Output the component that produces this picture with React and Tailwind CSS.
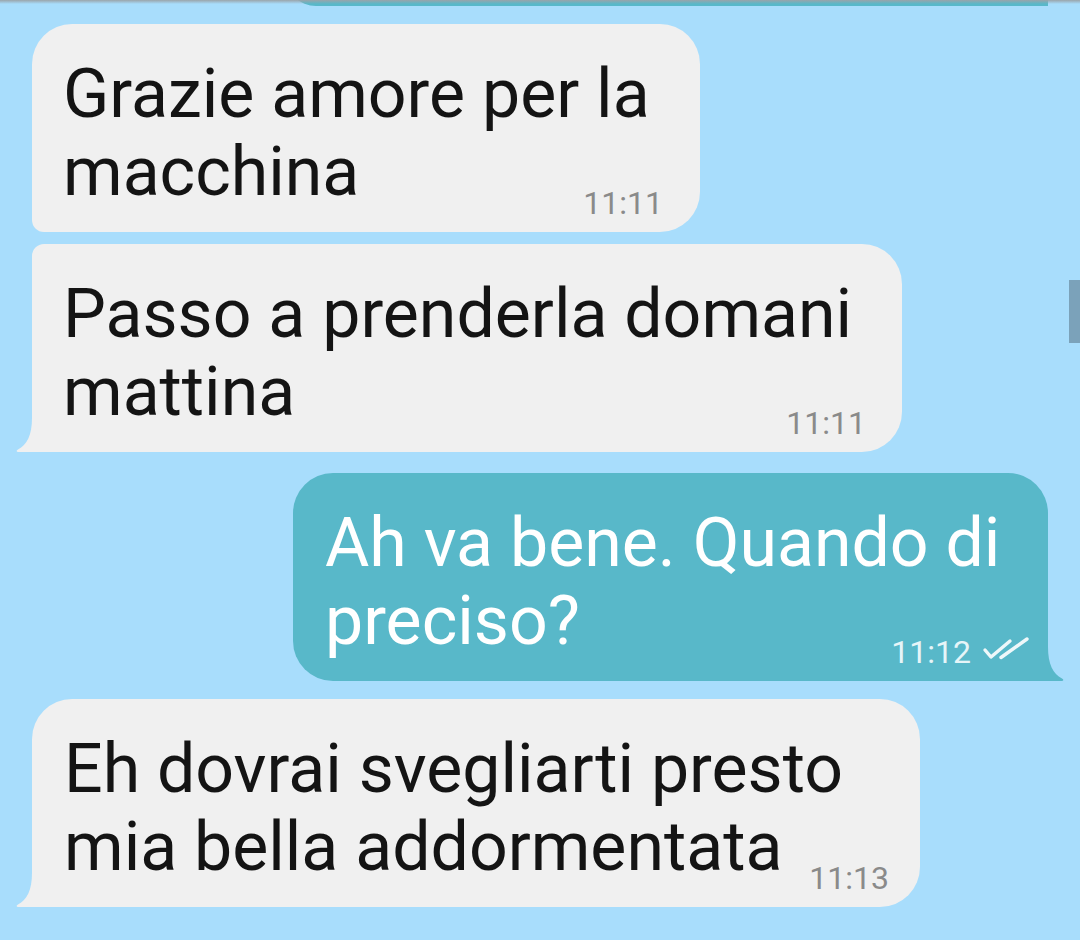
import React from "react";

const font = { fontFamily: "Roboto, 'Noto Sans', sans-serif" };

function TailLeft({ color }) {
  return (
    <svg className="absolute bottom-0 left-[-16px]" width="18" height="34" viewBox="0 0 18 34">
      <path d="M17 0 L16 0 C16 17 11 27 2 31.5 C0 32.5 0.5 34 2.5 34 L17 34 Z" fill={color} />
    </svg>
  );
}

function TailRight({ color }) {
  return (
    <svg className="absolute bottom-0 right-[-16px]" width="18" height="34" viewBox="0 0 18 34">
      <path d="M1 0 L2 0 C2 17 7 27 16 31.5 C18 32.5 17.5 34 15.5 34 L1 34 Z" fill={color} />
    </svg>
  );
}

function Checks() {
  return (
    <svg width="48" height="24" viewBox="0 0 48 24" className="ml-[11px] self-start mt-[2px]">
      <path d="M3 14 L9 21 L28 5" fill="none" stroke="#eef8fa" strokeWidth="3.4" strokeLinecap="round" strokeLinejoin="round" />
      <path d="M19 21.5 L45 3" fill="none" stroke="#eef8fa" strokeWidth="3.4" strokeLinecap="round" strokeLinejoin="round" />
    </svg>
  );
}

export default function App() {
  return (
    <div className="relative w-[1080px] h-[940px] overflow-hidden bg-[#a8ddfc]" style={font}>
      <div className="flex flex-col px-[32px]">
        {/* previous sent bubble bottom */}
        <div className="h-[6px] overflow-hidden flex justify-end">
          <div className="relative -mt-[54px] h-[60px] w-[762px] shrink-0 bg-[#58b8c9] rounded-[40px] rounded-br-none">
            <TailRight color="#58b8c9" />
          </div>
        </div>

        {/* bubble 1 */}
        <div className="mt-[18px] w-[668px] h-[208px] bg-[#f0f0f0] rounded-[40px] rounded-bl-[12px] pt-[31px] pl-[31px] pr-[37px] pb-[11px] flex flex-col">
          <div className="text-[68px] leading-[78px] text-[#141414] whitespace-nowrap">
            Grazie amore per la<br />macchina
          </div>
          <div className="-mt-[26px] h-[36px] flex justify-end items-center text-[32px] leading-[36px] text-[#8a8a8a]">
            11:11
          </div>
        </div>

        {/* bubble 2 */}
        <div className="relative mt-[12px] w-[870px] h-[208px] bg-[#f0f0f0] rounded-[40px] rounded-tl-[12px] rounded-bl-none pt-[31px] pl-[31px] pr-[36px] pb-[11px] flex flex-col">
          <div className="text-[68px] leading-[78px] text-[#141414] whitespace-nowrap">
            Passo a prenderla domani<br />mattina
          </div>
          <div className="-mt-[26px] h-[36px] flex justify-end items-center text-[32px] leading-[36px] text-[#8a8a8a]">
            11:11
          </div>
          <TailLeft color="#f0f0f0" />
        </div>

        {/* bubble 3 sent */}
        <div className="relative self-end mt-[21px] w-[755px] h-[208px] bg-[#58b8c9] rounded-[40px] rounded-br-none pt-[31px] pl-[32px] pr-[18px] pb-[11px] flex flex-col">
          <div className="text-[68px] leading-[78px] text-white whitespace-nowrap">
            Ah va bene. Quando di<br />preciso?
          </div>
          <div className="-mt-[26px] h-[36px] flex justify-end items-center text-[32px] leading-[36px] text-[#e6f5f8]">
            <span>11:12</span>
            <Checks />
          </div>
          <TailRight color="#58b8c9" />
        </div>

        {/* bubble 4 */}
        <div className="relative mt-[18px] w-[888px] h-[208px] bg-[#f0f0f0] rounded-[40px] rounded-bl-none pt-[31px] pl-[32px] pr-[31px] pb-[11px] flex flex-col">
          <div className="text-[68px] leading-[78px] text-[#141414] whitespace-nowrap">
            Eh dovrai svegliarti presto<br />mia bella addormentata
          </div>
          <div className="-mt-[26px] h-[36px] flex justify-end items-center text-[32px] leading-[36px] text-[#8a8a8a]">
            11:13
          </div>
          <TailLeft color="#f0f0f0" />
        </div>
      </div>

      {/* top shadow */}
      <div className="absolute top-0 left-0 right-0 h-[4px] bg-gradient-to-b from-[#9aa4aa] to-transparent" />
      {/* scrollbar */}
      <div className="absolute right-0 top-[280px] w-[11px] h-[63px] bg-[#7ba2ba]" />
    </div>
  );
}
